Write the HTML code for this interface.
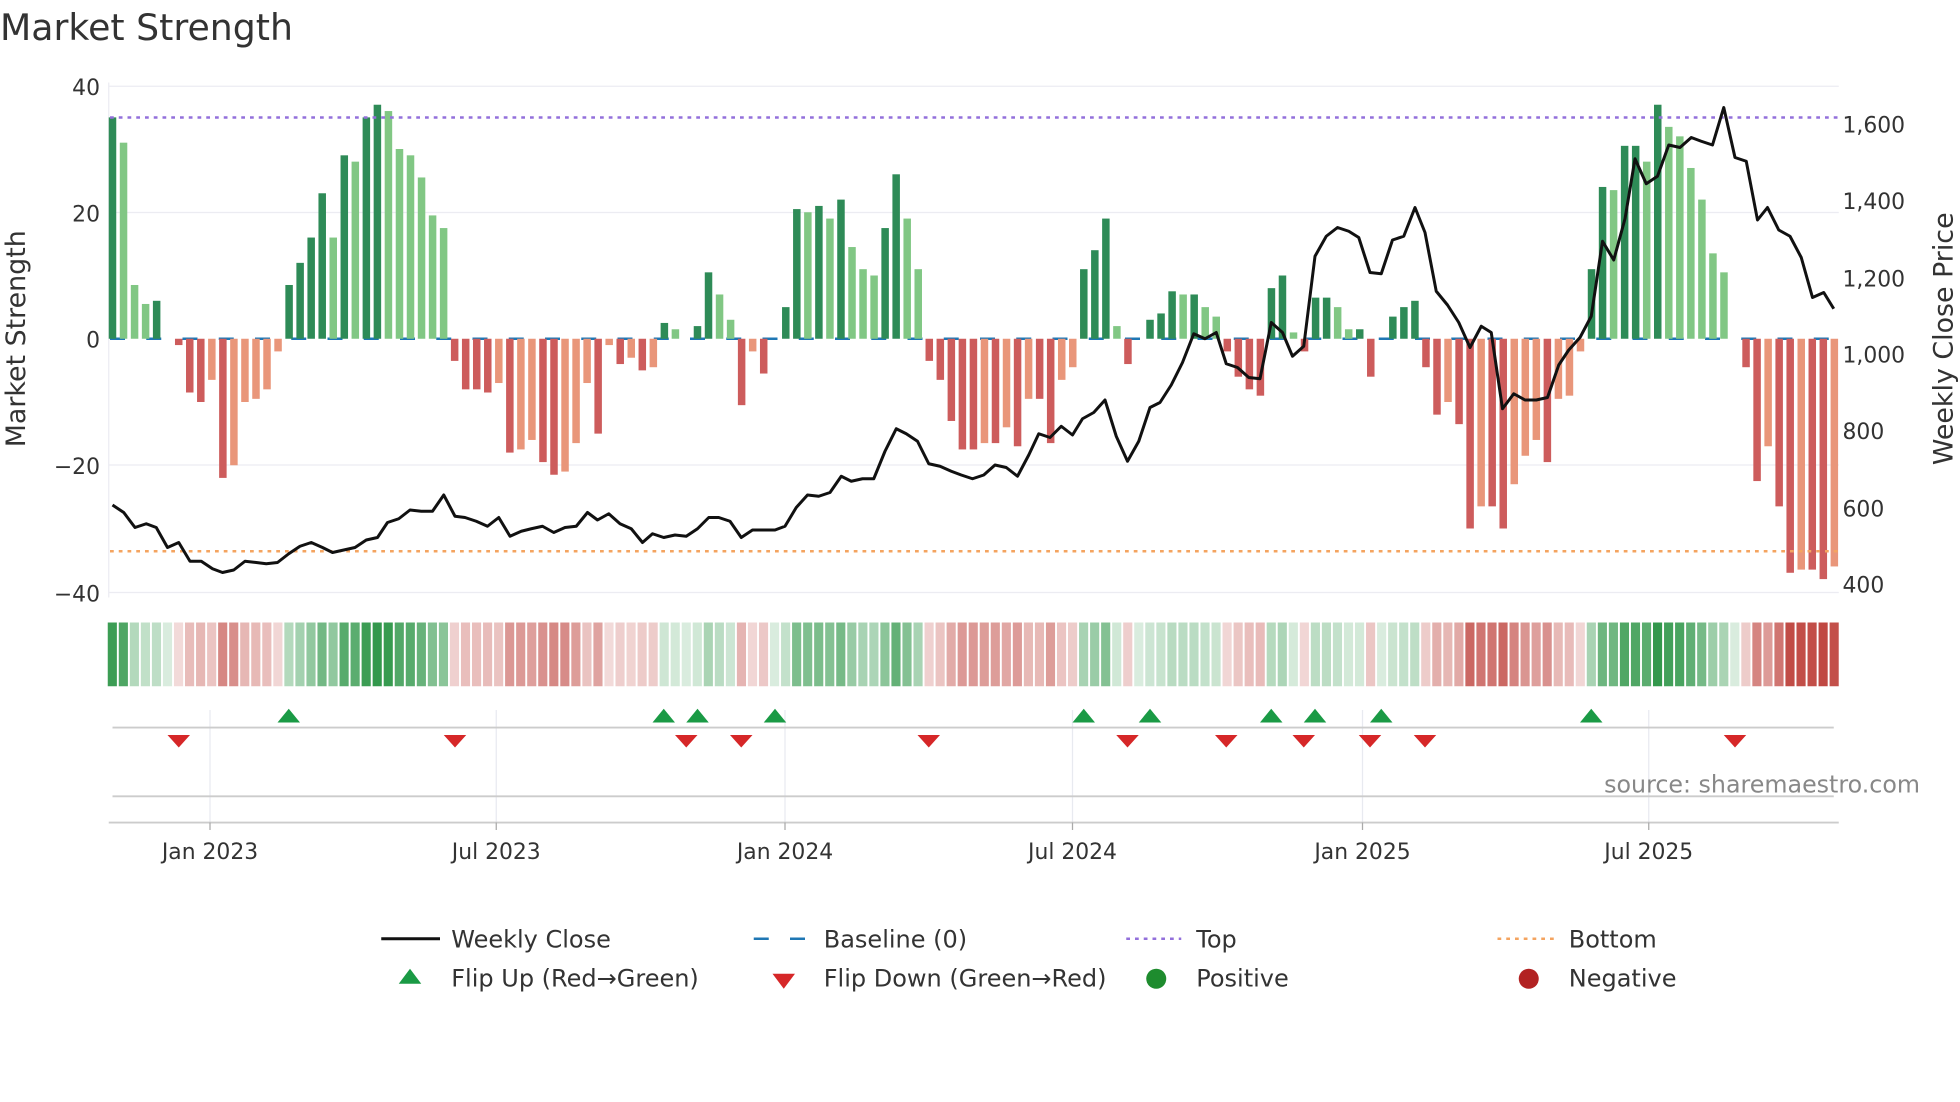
<!DOCTYPE html>
<html><head><meta charset="utf-8"><style>
html,body{margin:0;padding:0;background:#fff;width:1960px;height:1102px;overflow:hidden}
svg{display:block;font-family:"DejaVu Sans","Liberation Sans",sans-serif}
</style></head><body>
<svg id="s" width="1960" height="1102" viewBox="0 0 1568 881.6" xmlns="http://www.w3.org/2000/svg">
<text x="0" y="32" font-size="29" fill="#333">Market Strength</text>
<g stroke="#ececf2" stroke-width="1">
<line x1="87" x2="1471" y1="69" y2="69"/><line x1="87" x2="1471" y1="170" y2="170"/>
<line x1="87" x2="1471" y1="372" y2="372"/><line x1="87" x2="1471" y1="474" y2="474"/>
<line x1="87" x2="87" y1="66" y2="478"/>
</g>
<g font-size="17.5" fill="#333" text-anchor="end">
<text x="80" y="76">40</text><text x="80" y="177">20</text><text x="80" y="278">0</text>
<text x="80" y="379">−20</text><text x="80" y="481">−40</text>
</g>
<g font-size="17.5" fill="#333">
<text x="1474" y="106">1,600</text><text x="1474" y="167">1,400</text><text x="1474" y="229">1,200</text>
<text x="1474" y="290">1,000</text><text x="1474" y="351">800</text><text x="1474" y="413">600</text><text x="1474" y="474">400</text>
</g>
<text transform="translate(20,271) rotate(-90)" font-size="21.5" fill="#333" text-anchor="middle">Market Strength</text>
<text transform="translate(1562,271) rotate(-90)" font-size="21.5" fill="#333" text-anchor="middle">Weekly Close Price</text>
<line x1="88" x2="1470" y1="271" y2="271" stroke="#1f77b4" stroke-width="2" stroke-dasharray="12,17"/>
<g id="bars"></g>
<g id="heat"></g>
<line x1="88" x2="1470" y1="94" y2="94" stroke="#9370db" stroke-width="2" stroke-dasharray="3,4"/>
<line x1="88" x2="1470" y1="441" y2="441" stroke="#f4a460" stroke-width="2" stroke-dasharray="3,4"/>
<polyline id="price" fill="none" stroke="#111" stroke-width="2.4" stroke-linejoin="round"/>
<g stroke="#e8eaf0" stroke-width="1">
<line x1="168" x2="168" y1="568" y2="658"/><line x1="397" x2="397" y1="568" y2="658"/>
<line x1="628" x2="628" y1="568" y2="658"/><line x1="858" x2="858" y1="568" y2="658"/>
<line x1="1090" x2="1090" y1="568" y2="658"/><line x1="1319" x2="1319" y1="568" y2="658"/>
</g>
<line x1="90" x2="1467" y1="582" y2="582" stroke="#ccc" stroke-width="1.5"/>
<line x1="90" x2="1467" y1="637" y2="637" stroke="#ccc" stroke-width="1.5"/>
<line x1="87" x2="1471" y1="658" y2="658" stroke="#ccc" stroke-width="1.5"/>
<g stroke="#aaa" stroke-width="1">
<line x1="168" x2="168" y1="658" y2="664"/><line x1="397" x2="397" y1="658" y2="664"/>
<line x1="628" x2="628" y1="658" y2="664"/><line x1="858" x2="858" y1="658" y2="664"/>
<line x1="1090" x2="1090" y1="658" y2="664"/><line x1="1319" x2="1319" y1="658" y2="664"/>
</g>
<g id="flips"></g>
<g font-size="17.5" fill="#333" text-anchor="middle">
<text x="168" y="687">Jan 2023</text><text x="397" y="687">Jul 2023</text><text x="628" y="687">Jan 2024</text>
<text x="858" y="687">Jul 2024</text><text x="1090" y="687">Jan 2025</text><text x="1319" y="687">Jul 2025</text>
</g>
<text x="1536" y="634" font-size="19" fill="#888" text-anchor="end">source: sharemaestro.com</text>
<g font-size="19.2" fill="#333">
<line x1="305" x2="352" y1="751" y2="751" stroke="#111" stroke-width="2.4"/><text x="361" y="758">Weekly Close</text>
<line x1="603" x2="648" y1="751" y2="751" stroke="#1f77b4" stroke-width="2" stroke-dasharray="12,17"/><text x="659" y="758">Baseline (0)</text>
<line x1="901" x2="945" y1="751" y2="751" stroke="#9370db" stroke-width="2" stroke-dasharray="3,4"/><text x="957" y="758">Top</text>
<line x1="1198" x2="1243" y1="751" y2="751" stroke="#f4a460" stroke-width="2" stroke-dasharray="3,4"/><text x="1255" y="758">Bottom</text>
<polygon points="319,787 337,787 328,775" fill="#1a9a45"/><text x="361" y="789">Flip Up (Red→Green)</text>
<polygon points="618,779 636,779 627,791" fill="#d62728"/><text x="659" y="789">Flip Down (Green→Red)</text>
<circle cx="925" cy="783" r="8" fill="#1e8c2e"/><text x="957" y="789">Positive</text>
<circle cx="1223" cy="783" r="8" fill="#b22222"/><text x="1255" y="789">Negative</text>
</g>
</svg>
<script>
var v=[35,31,8.5,5.5,6,0,-1,-8.5,-10,-6.5,-22,-20,-10,-9.5,-8,-2,8.5,12,16,23,16,29,28,35,37,36,30,29,25.5,19.5,17.5,-3.5,-8,-8,-8.5,-7,-18,-17.5,-16,-19.5,-21.5,-21,-16.5,-7,-15,-1,-4,-3,-5,-4.5,2.5,1.5,0,2,10.5,7,3,-10.5,-2,-5.5,0,5,20.5,20,21,19,22,14.5,11,10,17.5,26,19,11,-3.5,-6.5,-13,-17.5,-17.5,-16.5,-16.5,-14,-17,-9.5,-9.5,-16.5,-6.5,-4.5,11,14,19,2,-4,0,3,4,7.5,7,7,5,3.5,-2,-6,-8,-9,8,10,1,-2,6.5,6.5,5,1.5,1.5,-6,0,3.5,5,6,-4.5,-12,-10,-13.5,-30,-26.5,-26.5,-30,-23,-18.5,-16,-19.5,-9.5,-9,-2,11,24,23.5,30.5,30.5,28,37,33.5,32,27,22,13.5,10.5,0,-4.5,-22.5,-17,-26.5,-37,-36.5,-36.5,-38,-36];
var NS="http://www.w3.org/2000/svg";
function el(t,a,p){var e=document.createElementNS(NS,t);for(var k in a)e.setAttribute(k,a[k]);p.appendChild(e);return e;}
var bars=document.getElementById('bars'),heat=document.getElementById('heat');
for(var i=0;i<v.length;i++){
 var x=90+i*8.83,val=v[i];
 var prev=i>0?v[i-1]:0;
 var strong=Math.abs(val)>=Math.abs(prev)||(val*prev<=0);
 if(val!==0){
  var h=Math.abs(val)*5.06,y=val>0?271-h:271;
  var c=val>0?(strong?'#2e8b57':'#81c784'):(strong?'#cd5c5c':'#e9967a');
  el('rect',{x:x-3,y:y,width:6,height:h,fill:c},bars);
 }
 var a=Math.min(1,0.18+0.82*Math.abs(val)/38);
 var col=val>=0?'rgba(46,150,72,'+a+')':'rgba(192,72,66,'+a+')';
 el('rect',{x:x-3.8,y:498,width:7.3,height:51,fill:col},heat);
}
var p=[[90,404],[99,410],[108,422],[117,419],[125,422],[134,438],[143,434],[152,449],[161,449],[170,455],[178,458],[187,456],[196,449],[205,450],[213,451],[222,450],[231,443],[240,437],[249,434],[258,438],[266,442],[275,440],[284,438],[293,432],[302,430],[310,418],[319,415],[328,408],[337,409],[346,409],[355,396],[364,413],[372,414],[381,417],[390,421],[399,414],[408,429],[417,425],[425,423],[434,421],[443,426],[452,422],[461,421],[470,410],[478,416],[487,411],[496,419],[505,423],[514,434],[522,427],[531,430],[540,428],[549,429],[558,423],[567,414],[575,414],[584,417],[593,430],[602,424],[611,424],[620,424],[628,421],[637,406],[646,396],[655,397],[664,394],[673,381],[681,385],[690,383],[699,383],[708,361],[717,343],[725,347],[734,353],[743,371],[752,373],[761,377],[769,380],[778,383],[787,380],[796,372],[805,374],[814,381],[823,364],[831,347],[840,350],[849,341],[858,348],[866,335],[875,330],[884,320],[893,349],[902,369],[911,353],[920,326],[928,322],[937,308],[946,290],[955,267],[964,271],[973,266],[981,291],[990,294],[999,302],[1008,303],[1017,258],[1026,266],[1034,285],[1043,277],[1052,205],[1061,189],[1070,182],[1079,185],[1087,190],[1096,218],[1105,219],[1114,192],[1123,189],[1132,166],[1140,186],[1149,233],[1158,244],[1167,258],[1176,278],[1185,261],[1193,266],[1202,327],[1211,315],[1220,320],[1229,320],[1238,318],[1247,292],[1255,280],[1264,270],[1273,253],[1282,193],[1291,208],[1300,175],[1308,127],[1317,147],[1326,141],[1335,116],[1344,118],[1353,110],[1361,113],[1370,116],[1379,86],[1388,126],[1397,129],[1406,176],[1414,166],[1423,184],[1432,189],[1441,206],[1450,238],[1459,234],[1467,247]];
document.getElementById('price').setAttribute('points',p.map(function(q){return q.join(',')}).join(' '));
var fl=document.getElementById('flips');
[231,531,558,620,867,920,1017,1052,1105,1273].forEach(function(x){el('polygon',{points:(x-9)+',578 '+(x+9)+',578 '+x+',567',fill:'#1a9a45'},fl);});
[143,364,549,593,743,902,981,1043,1096,1140,1388].forEach(function(x){el('polygon',{points:(x-9)+',588 '+(x+9)+',588 '+x+',598',fill:'#d62728'},fl);});
</script>
</body></html>
